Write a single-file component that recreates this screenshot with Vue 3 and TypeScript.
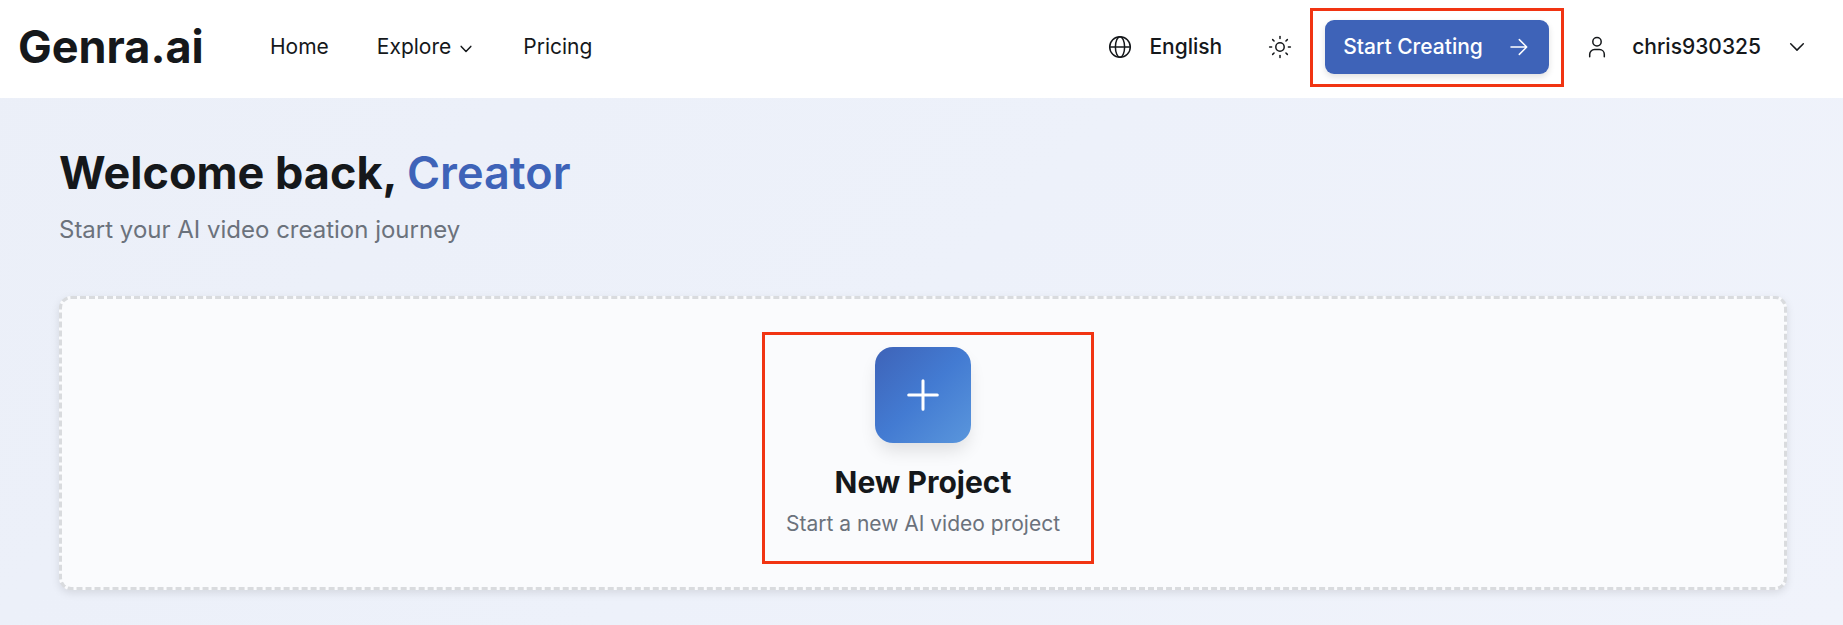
<script setup lang="ts">
interface NavLink {
  label: string
  menu: boolean
}

const links: NavLink[] = [
  { label: 'Home', menu: false },
  { label: 'Explore', menu: true },
  { label: 'Pricing', menu: false },
]
const rays: number[] = [0, 45, 90, 135, 180, 225, 270, 315]
</script>

<template>
  <div class="page">
    <header class="header">
      <div class="brand">Genra.ai</div>
      <nav class="nav">
        <a v-for="link in links" :key="link.label" class="link">
          {{ link.label }}
          <svg v-if="link.menu" class="caret" width="12" height="8" viewBox="0 0 12 8">
            <path d="M1.2 1.4 6 6.4l4.8-5" />
          </svg>
        </a>
      </nav>
      <div class="tools">
        <svg class="globe" width="24" height="24" viewBox="0 0 24 24">
          <circle cx="12" cy="12" r="10.3" />
          <ellipse cx="12" cy="12" rx="4.6" ry="10.3" />
          <path d="M1.7 12h20.6" />
        </svg>
        <span class="language">English</span>
        <svg class="sun" width="24" height="24" viewBox="0 0 24 24">
          <circle cx="12" cy="12" r="4.2" />
          <path v-for="angle in rays" :key="angle" d="M12 1.6v2" :transform="`rotate(${angle} 12 12)`" />
        </svg>
        <div class="cta-slot">
          <button class="cta">
            <span>Start Creating</span>
            <svg width="18" height="18" viewBox="0 0 18 18"><path d="M1 9h15.5M9.3 1.6 16.7 9l-7.4 7.4" /></svg>
          </button>
          <div class="marker marker-cta"></div>
        </div>
        <svg class="user" width="18" height="24" viewBox="0 0 18 24">
          <circle cx="9" cy="6.7" r="4.2" />
          <path d="M1.7 21.7v-2.4a4.8 4.8 0 0 1 4.8-4.8h5a4.8 4.8 0 0 1 4.8 4.8v2.4" />
        </svg>
        <span class="username">chris930325</span>
        <svg class="user-caret" width="16" height="10" viewBox="0 0 16 10"><path d="M1.7 1.8 8 8.1l6.3-6.3" /></svg>
      </div>
    </header>

    <main class="main">
      <h1 class="title">Welcome back, <span class="accent">Creator</span></h1>
      <p class="subtitle">Start your AI video creation journey</p>
      <section class="card">
        <div class="tile">
          <svg width="36" height="36" viewBox="0 0 36 36"><path d="M18 3.7v28.6M3.7 18h28.6" /></svg>
        </div>
        <h2 class="card-title">New Project</h2>
        <p class="card-text">Start a new AI video project</p>
        <div class="marker marker-card"></div>
      </section>
    </main>
  </div>
</template>

<style>
body {
  margin: 0;
}
</style>

<style scoped>
.page {
  box-sizing: border-box;
  width: 100%;
  height: 625px;
  overflow: hidden;
  font-family: Inter, 'Liberation Sans', sans-serif;
  color: #15181b;
  background: linear-gradient(135deg, #ebeff8 0%, #edf1fa 50%, #f0f3fb 100%);
}
svg {
  display: block;
  flex: none;
  fill: none;
  stroke: currentColor;
  stroke-width: 1.5;
  stroke-linecap: round;
  stroke-linejoin: round;
}
h1,
h2,
p {
  margin: 0;
}
.header {
  box-sizing: border-box;
  display: flex;
  align-items: center;
  height: 98px;
  padding: 0 38px 4px 18px;
  background: #fff;
  font-size: 21px;
  line-height: 30px;
  white-space: nowrap;
}
.brand {
  width: 252px;
  font-size: 45px;
  line-height: 54px;
  font-weight: 700;
}
.nav {
  display: flex;
  gap: 48px;
}
.link {
  display: flex;
  align-items: center;
  gap: 9px;
}
.caret {
  margin: 4px 3px 0 0;
}
.tools {
  display: flex;
  align-items: center;
  margin-left: auto;
  font-weight: 500;
}
.language {
  margin: 0 46px 0 17px;
}
.cta-slot {
  position: relative;
  margin: 0 39px 0 33px;
}
.cta {
  box-sizing: border-box;
  display: flex;
  align-items: center;
  justify-content: space-between;
  width: 224px;
  height: 54px;
  padding: 0 21px 0 18px;
  border: 0;
  border-radius: 9px;
  background: #3e63b8;
  box-shadow: 0 3px 6px rgba(0, 0, 0, 0.12);
  color: #fff;
  font: inherit;
}
.marker {
  position: absolute;
  box-sizing: border-box;
  border: 3px solid #f13412;
  pointer-events: none;
}
.marker-cta {
  inset: -12px -15px -13px;
}
.username {
  margin: 0 28px 0 26px;
}
.main {
  padding: 45px 56px 0 59px;
}
.title {
  font-size: 45px;
  line-height: 60px;
  font-weight: 700;
}
.accent {
  font-weight: 600;
  color: #3e63b8;
}
.subtitle {
  margin-top: 9px;
  font-size: 24px;
  line-height: 36px;
  color: #6b727c;
}
.card {
  position: relative;
  box-sizing: border-box;
  display: flex;
  flex-direction: column;
  align-items: center;
  height: 294px;
  margin-top: 48px;
  padding-top: 48px;
  border: 3px dashed #d9dbde;
  border-radius: 12px;
  background: #fafbfd;
  box-shadow: 0 3px 9px rgba(0, 0, 0, 0.1);
}
.tile {
  display: flex;
  align-items: center;
  justify-content: center;
  width: 96px;
  height: 96px;
  border-radius: 18px;
  background: linear-gradient(135deg, #3e63b8 0%, #437bd2 50%, #5a96dc 100%);
  box-shadow: 0 10px 18px -3px rgba(0, 0, 0, 0.12);
  color: #fff;
}
.tile svg {
  stroke-width: 3;
}
.card-title {
  margin-top: 18px;
  font-size: 30px;
  line-height: 42px;
  font-weight: 700;
}
.card-text {
  margin-top: 5px;
  font-size: 21px;
  line-height: 32px;
  color: #6b727c;
}
.marker-card {
  top: 33px;
  left: 700px;
  width: 332px;
  height: 232px;
}
</style>
